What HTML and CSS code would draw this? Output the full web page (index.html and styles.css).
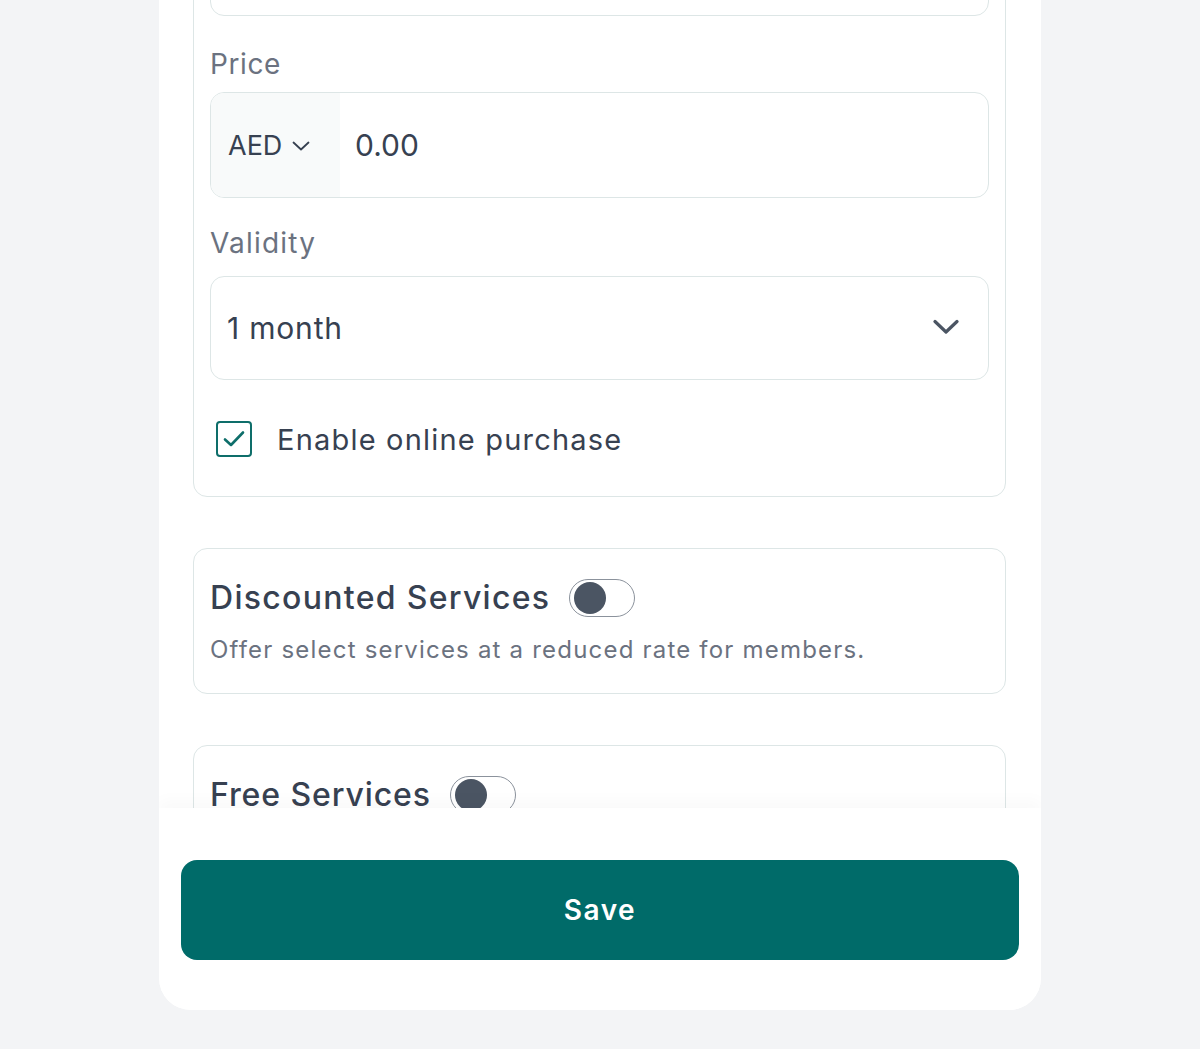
FILE: index.html
```html
<!DOCTYPE html>
<html lang="en">
<head>
<meta charset="utf-8">
<title>Membership</title>
<link rel="stylesheet" href="styles.css">
</head>
<body>
<div class="panel">
  <div class="scroll">
    <div class="scroll-inner">
      <section class="card card-form">
        <div class="input input-top"></div>
        <label class="label label-price">Price</label>
        <div class="input price">
          <div class="currency">
            <span>AED</span>
            <svg class="chev-sm" width="18" height="10" viewBox="0 0 18 10"><path d="M1.5 1.5 L9 8.5 L16.5 1.5" fill="none" stroke="#374151" stroke-width="1.8" stroke-linecap="round" stroke-linejoin="round"/></svg>
          </div>
          <div class="amount">0.00</div>
        </div>
        <label class="label label-validity">Validity</label>
        <div class="input select">
          <span class="select-value">1 month</span>
          <svg class="chev" width="26" height="16" viewBox="0 0 26 16"><path d="M2 2.5 L13 13 L24 2.5" fill="none" stroke="#4b5563" stroke-width="3.2" stroke-linecap="round" stroke-linejoin="round"/></svg>
        </div>
        <div class="check-row">
          <span class="checkbox">
            <svg width="24" height="20" viewBox="0 0 24 20"><path d="M3 10.5 L9 16 L21 3.5" fill="none" stroke="#0e6e6a" stroke-width="2.6" stroke-linecap="round" stroke-linejoin="round"/></svg>
          </span>
          <span class="check-label">Enable online purchase</span>
        </div>
      </section>

      <section class="card card-toggle">
        <div class="toggle-row">
          <h2 class="card-title">Discounted Services</h2>
          <span class="toggle"><span class="knob"></span></span>
        </div>
        <p class="card-desc">Offer select services at a reduced rate for members.</p>
      </section>

      <section class="card card-toggle card-last">
        <div class="toggle-row">
          <h2 class="card-title title-free">Free Services</h2>
          <span class="toggle"><span class="knob"></span></span>
        </div>
      </section>
    </div>
  </div>
  <div class="footer">
    <button class="save">Save</button>
  </div>
</div>
</body>
</html>
```

FILE: styles.css
```css
* { box-sizing: border-box; }
html, body { margin: 0; padding: 0; }
body {
  background: #f3f4f6;
  font-family: "Inter", "Noto Sans", sans-serif;
  color: #374151;
  height: 1049px;
  overflow: hidden;
}
.panel {
  width: 882px;
  height: 1010px;
  margin: 0 auto;
  background: #fff;
  border-radius: 0 0 32px 32px;
  display: flex;
  flex-direction: column;
  overflow: hidden;
}
.scroll {
  height: 808px;
  flex: none;
  overflow: hidden;
}
.scroll-inner {
  margin-top: -106px;
  padding: 0 35px 0 34px;
  display: flex;
  flex-direction: column;
  gap: 51px;
}
.card {
  border: 1px solid #dde6e6;
  border-radius: 14px;
  background: #fff;
}
.card-form {
  padding: 17px 16px 37px 16px;
  display: flex;
  flex-direction: column;
}
.input {
  border: 1px solid #dde6e6;
  border-radius: 14px;
  background: #fff;
}
.input-top { height: 104px; }
.label {
  display: block;
  font-size: 28px;
  line-height: 40px;
  letter-spacing: 1.2px;
  color: #6b7280;
  font-weight: 400;
}
.label-price { margin-top: 28px; letter-spacing: 0.6px; }
.label-validity { margin-top: 25px; }
.price {
  margin-top: 8px;
  height: 106px;
  display: flex;
  overflow: hidden;
}
.currency {
  width: 129px;
  background: #f8fafa;
  display: flex;
  align-items: center;
  padding-left: 17px;
  gap: 10px;
  font-size: 27px;
  color: #374151;
}
.chev-sm { margin-top: 1px; }
.amount {
  display: flex;
  align-items: center;
  padding-left: 15px;
  font-size: 30px;
  color: #374151;
}
.select {
  margin-top: 13px;
  height: 104px;
  display: flex;
  align-items: center;
  justify-content: space-between;
  padding: 0 29px 0 16px;
}
.select-value { font-size: 30px; letter-spacing: 0.8px; color: #374151; }
.chev { margin-top: -2px; }
.check-row {
  margin-top: 39px;
  height: 40px;
  display: flex;
  align-items: center;
  padding-left: 6px;
  gap: 25px;
}
.checkbox {
  width: 36px;
  height: 36px;
  border: 2.5px solid #0e6e6a;
  border-radius: 4px;
  display: flex;
  align-items: center;
  justify-content: center;
}
.check-label { font-size: 29px; letter-spacing: 1.2px; color: #374151; }
.card-toggle {
  padding: 30px 16px 26px 16px;
}
.card-last { padding-bottom: 80px; }
.toggle-row {
  display: flex;
  align-items: center;
  gap: 19px;
  height: 38px;
}
.card-title {
  margin: 0;
  font-size: 32px;
  font-weight: 500;
  letter-spacing: 1.3px;
  color: #374151;
  line-height: 38px;
}
.title-free { letter-spacing: 0.9px; }
.toggle {
  width: 66px;
  height: 38px;
  border: 1.5px solid #8b929c;
  border-radius: 19px;
  padding: 0 0 0 4px;
  display: flex;
  align-items: center;
  flex: none;
}
.knob {
  width: 32px;
  height: 32px;
  border-radius: 50%;
  background: #4b5563;
}
.card-desc {
  margin: 16px 0 0 0;
  font-size: 24px;
  line-height: 34px;
  letter-spacing: 1.2px;
  color: #6b7280;
}
.footer {
  flex: none;
  height: 202px;
  padding: 52px 22px 50px 22px;
  background: #fff;
  position: relative;
  box-shadow: 0 -8px 14px rgba(0, 0, 0, 0.025);
}
.save {
  width: 100%;
  height: 100px;
  border: none;
  border-radius: 16px;
  background: #006b69;
  color: #fff;
  font-family: "Inter", "Noto Sans", sans-serif;
  font-size: 28px;
  font-weight: 600;
  letter-spacing: 1.5px;
  cursor: pointer;
}
```
